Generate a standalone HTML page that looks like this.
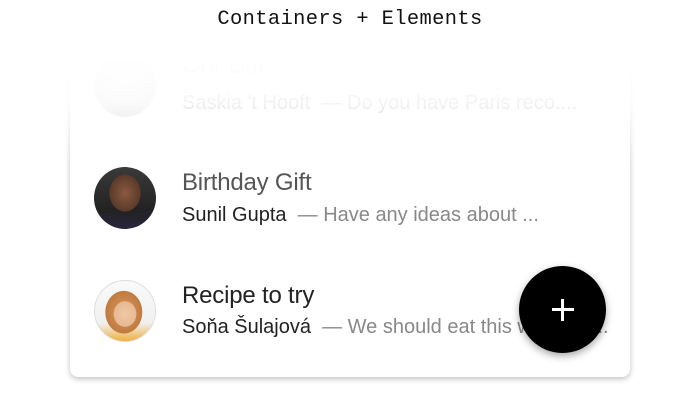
<!DOCTYPE html>
<html><head><meta charset="utf-8"><style>
body{margin:0;width:700px;height:410px;background:#fff;position:relative;overflow:hidden;font-family:"Liberation Sans",sans-serif}
.h{position:absolute;top:8px;left:0;width:700px;text-align:center;font:20.4px "Liberation Mono",monospace;color:#111;letter-spacing:0.4px}
.card{position:absolute;left:70px;top:40px;width:560px;height:337px;background:#fff;border-radius:8px;box-shadow:0 2px 6px rgba(0,0,0,.25)}
.fade{position:absolute;left:50px;top:30px;width:600px;height:135px;background:linear-gradient(#fff 0,#fff 20%,rgba(255,255,255,.9) 55%,rgba(255,255,255,0) 100%)}
.av{position:absolute;left:94px;width:62px;height:62px;border-radius:50%;overflow:hidden}
.t{position:absolute;left:182px;font-size:24px;color:#555;white-space:nowrap;letter-spacing:-0.2px}
.s{position:absolute;left:182px;font-size:20px;color:#222;white-space:nowrap}
.s span{color:#888}
.fab{position:absolute;left:519px;top:266px;width:87px;height:87px;border-radius:50%;background:#000;box-shadow:0 3px 8px rgba(0,0,0,.35)}
.fab:before{content:"";position:absolute;left:33px;top:42px;width:22px;height:3px;background:#fff}
.fab:after{content:"";position:absolute;left:42px;top:33px;width:3px;height:22px;background:#fff}
</style></head><body>
<div class="h">Containers + Elements</div>
<div class="card"></div>
<div class="av" style="top:55px;background:radial-gradient(circle at 50% 40%,#eee,#ccc 60%,#ddd)"></div>
<div class="t" style="top:52px;color:#999">Our Car</div>
<div class="s" style="top:92px;color:#777">Saskia 't Hooft <span>&nbsp;— Do you have Paris reco....</span></div>
<div class="fade"></div>
<div class="av" style="top:167px;background:radial-gradient(ellipse 22px 26px at 50% 42%,#8a5a40,#5a3a2a 70%,transparent 72%),linear-gradient(#3a3a3a,#222 70%,#2a2440)"></div>
<div class="t" style="top:169px">Birthday Gift</div>
<div class="s" style="top:204px">Sunil Gupta <span>&nbsp;— Have any ideas about ...</span></div>
<div class="av" style="top:280px;border:1px solid #ddd;box-sizing:border-box;background:radial-gradient(ellipse 16px 18px at 50% 55%,#f0c8a8,#e8b890 70%,transparent 72%),radial-gradient(ellipse 26px 30px at 48% 52%,#d89a60,#c07a40 70%,transparent 72%),linear-gradient(#fafafa,#f0f0f0 70%,#f0b040)"></div>
<div class="t" style="top:282px;color:#222">Recipe to try</div>
<div class="s" style="top:316px">Soňa Šulajová <span>&nbsp;— We should eat this weekend..</span></div>
<div class="fab"></div>
</body></html>
